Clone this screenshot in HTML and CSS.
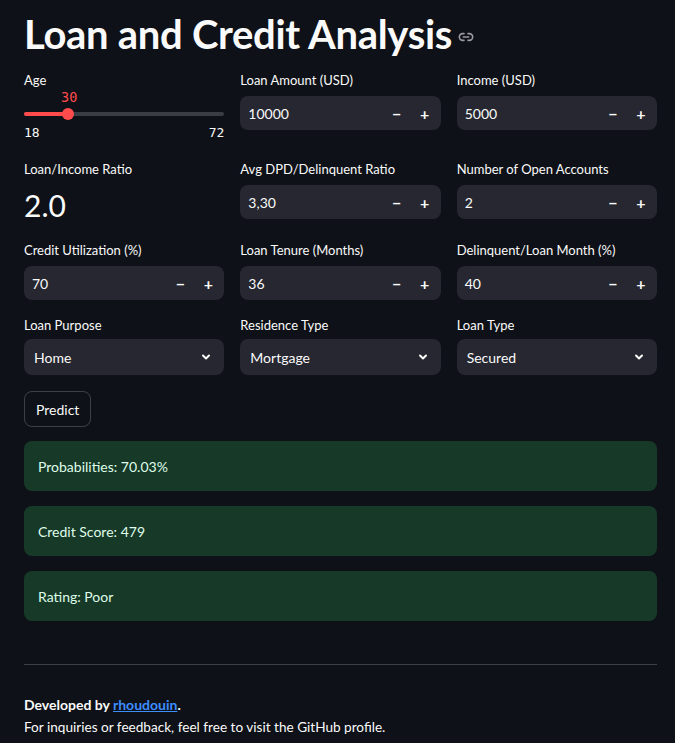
FILE: index.html
```html
<!DOCTYPE html>
<html>
<head>
<meta charset="utf-8">
<link rel="stylesheet" href="styles.css">
</head>
<body>
<main class="main">
  <h1 class="title">Loan and Credit Analysis <span class="anchor"><svg width="16" height="16" viewBox="0 0 24 24" fill="none" stroke="#9a9ba3" stroke-width="2.4" stroke-linecap="round"><path d="M9 7H7a5 5 0 0 0 0 10h2"/><path d="M15 7h2a5 5 0 0 1 0 10h-2"/><path d="M8 12h8"/></svg></span></h1>

  <div class="grid">
    <div class="field">
      <div class="label">Age</div>
      <div class="slider">
        <div class="slider-val">30</div>
        <div class="track"><div class="fill"></div><div class="thumb"></div></div>
        <div class="ticks"><span>18</span><span>72</span></div>
      </div>
    </div>
    <div class="field">
      <div class="label">Loan Amount (USD)</div>
      <div class="num"><span class="v">10000</span><span class="btn">−</span><span class="btn">+</span></div>
    </div>
    <div class="field">
      <div class="label">Income (USD)</div>
      <div class="num"><span class="v">5000</span><span class="btn">−</span><span class="btn">+</span></div>
    </div>

    <div class="field">
      <div class="label">Loan/Income Ratio</div>
      <div class="metric">2.0</div>
    </div>
    <div class="field">
      <div class="label">Avg DPD/Delinquent Ratio</div>
      <div class="num"><span class="v">3,30</span><span class="btn">−</span><span class="btn">+</span></div>
    </div>
    <div class="field">
      <div class="label">Number of Open Accounts</div>
      <div class="num"><span class="v">2</span><span class="btn">−</span><span class="btn">+</span></div>
    </div>

    <div class="field">
      <div class="label">Credit Utilization (%)</div>
      <div class="num"><span class="v">70</span><span class="btn">−</span><span class="btn">+</span></div>
    </div>
    <div class="field">
      <div class="label">Loan Tenure (Months)</div>
      <div class="num"><span class="v">36</span><span class="btn">−</span><span class="btn">+</span></div>
    </div>
    <div class="field">
      <div class="label">Delinquent/Loan Month (%)</div>
      <div class="num"><span class="v">40</span><span class="btn">−</span><span class="btn">+</span></div>
    </div>

    <div class="field">
      <div class="label">Loan Purpose</div>
      <div class="select"><span class="v">Home</span><svg class="chev" width="12" height="12" viewBox="0 0 12 12" fill="none" stroke="#fafafa" stroke-width="2" stroke-linecap="round" stroke-linejoin="round"><path d="M3 4.5l3 3 3-3"/></svg></div>
    </div>
    <div class="field">
      <div class="label">Residence Type</div>
      <div class="select"><span class="v">Mortgage</span><svg class="chev" width="12" height="12" viewBox="0 0 12 12" fill="none" stroke="#fafafa" stroke-width="2" stroke-linecap="round" stroke-linejoin="round"><path d="M3 4.5l3 3 3-3"/></svg></div>
    </div>
    <div class="field">
      <div class="label">Loan Type</div>
      <div class="select"><span class="v">Secured</span><svg class="chev" width="12" height="12" viewBox="0 0 12 12" fill="none" stroke="#fafafa" stroke-width="2" stroke-linecap="round" stroke-linejoin="round"><path d="M3 4.5l3 3 3-3"/></svg></div>
    </div>
  </div>

  <button class="predict">Predict</button>

  <div class="alerts">
    <div class="alert">Probabilities: 70.03%</div>
    <div class="alert">Credit Score: 479</div>
    <div class="alert">Rating: Poor</div>
  </div>

  <hr class="rule">

  <footer class="footer">
    <p class="dev"><strong>Developed by <a href="#">rhoudouin</a>.</strong></p>
    <p class="inq">For inquiries or feedback, feel free to visit the GitHub profile.</p>
  </footer>
</main>
</body>
</html>
```

FILE: styles.css
```css
* { box-sizing: border-box; }
html, body { margin: 0; padding: 0; background: #0e1117; }
body {
  color: #fafafa;
  font-family: "Lato", "Noto Sans", sans-serif;
  font-size: 16px;
}
.main {
  padding: 12px 18px 0 24px;
  display: flex;
  flex-direction: column;
}
.title {
  margin: 0;
  font-size: 40px;
  font-weight: 700;
  line-height: 44px;
  letter-spacing: -0.3px;
  display: flex;
  align-items: center;
  gap: 6px;
}
.anchor { display: inline-flex; margin-top: 6px; }
.grid {
  margin-top: 15px;
  display: grid;
  grid-template-columns: repeat(3, 1fr);
  column-gap: 16px;
  row-gap: 16px;
}
.field { display: flex; flex-direction: column; }
.label {
  font-size: 13px;
  line-height: 18px;
  height: 18px;
  margin-bottom: 7px;
}
.num, .select {
  height: 34px;
  background: #262730;
  border-radius: 8px;
  display: flex;
  align-items: center;
  font-size: 14px;
}
.num .v, .select .v { flex: 1; padding-left: 8px; }
.num .btn {
  width: 28px;
  text-align: center;
  font-size: 16px;
  font-weight: 700;
}
.num .btn:last-child { margin-right: 2px; }
.select { height: 36px; margin-top: -2px; }
.select .v { padding-left: 10px; }
.chev { margin-right: 12px; }
.slider { display: flex; flex-direction: column; padding-bottom: 3px; }
.slider-val {
  font-family: "DejaVu Sans Mono", monospace;
  color: #ff4b4b;
  font-size: 13.5px;
  line-height: 14px;
  margin-left: 37px;
  margin-top: -6px;
}
.track {
  position: relative;
  height: 4px;
  border-radius: 2px;
  background: #3b3d45;
  margin-top: 8px;
}
.fill {
  position: absolute;
  left: 0; top: 0; bottom: 0;
  width: 22%;
  background: #ff4b4b;
  border-radius: 2px;
}
.thumb {
  position: absolute;
  left: 22%;
  top: -4px;
  width: 12px; height: 12px;
  margin-left: -6px;
  border-radius: 50%;
  background: #ff4b4b;
}
.ticks {
  display: flex;
  justify-content: space-between;
  font-family: "DejaVu Sans Mono", monospace;
  font-size: 13px;
  margin-top: 9px;
  line-height: 16px;
}
.metric {
  font-size: 30px;
  line-height: 40px;
}
.predict {
  align-self: flex-start;
  margin-top: 16px;
  height: 36px;
  padding: 0 11px;
  background: transparent;
  color: #fafafa;
  border: 1px solid rgba(250, 250, 250, 0.2);
  border-radius: 8px;
  font-family: inherit;
  font-size: 14px;
}
.alerts {
  margin-top: 14px;
  display: flex;
  flex-direction: column;
  gap: 15px;
}
.alert {
  height: 50px;
  background: #173928;
  border-radius: 8px;
  color: #dffde9;
  font-size: 14px;
  display: flex;
  align-items: center;
  padding-left: 14px;
}
.rule {
  margin: 43px 0 0 0;
  border: none;
  border-top: 1px solid rgba(250, 250, 250, 0.2);
}
.footer { margin-top: 29px; font-size: 14px; }
.footer p { margin: 0; line-height: 22px; }
.footer .inq { font-size: 13.6px; }
.dev strong { font-weight: 700; }
.dev a { color: #3d8eff; text-decoration: underline; }
```
